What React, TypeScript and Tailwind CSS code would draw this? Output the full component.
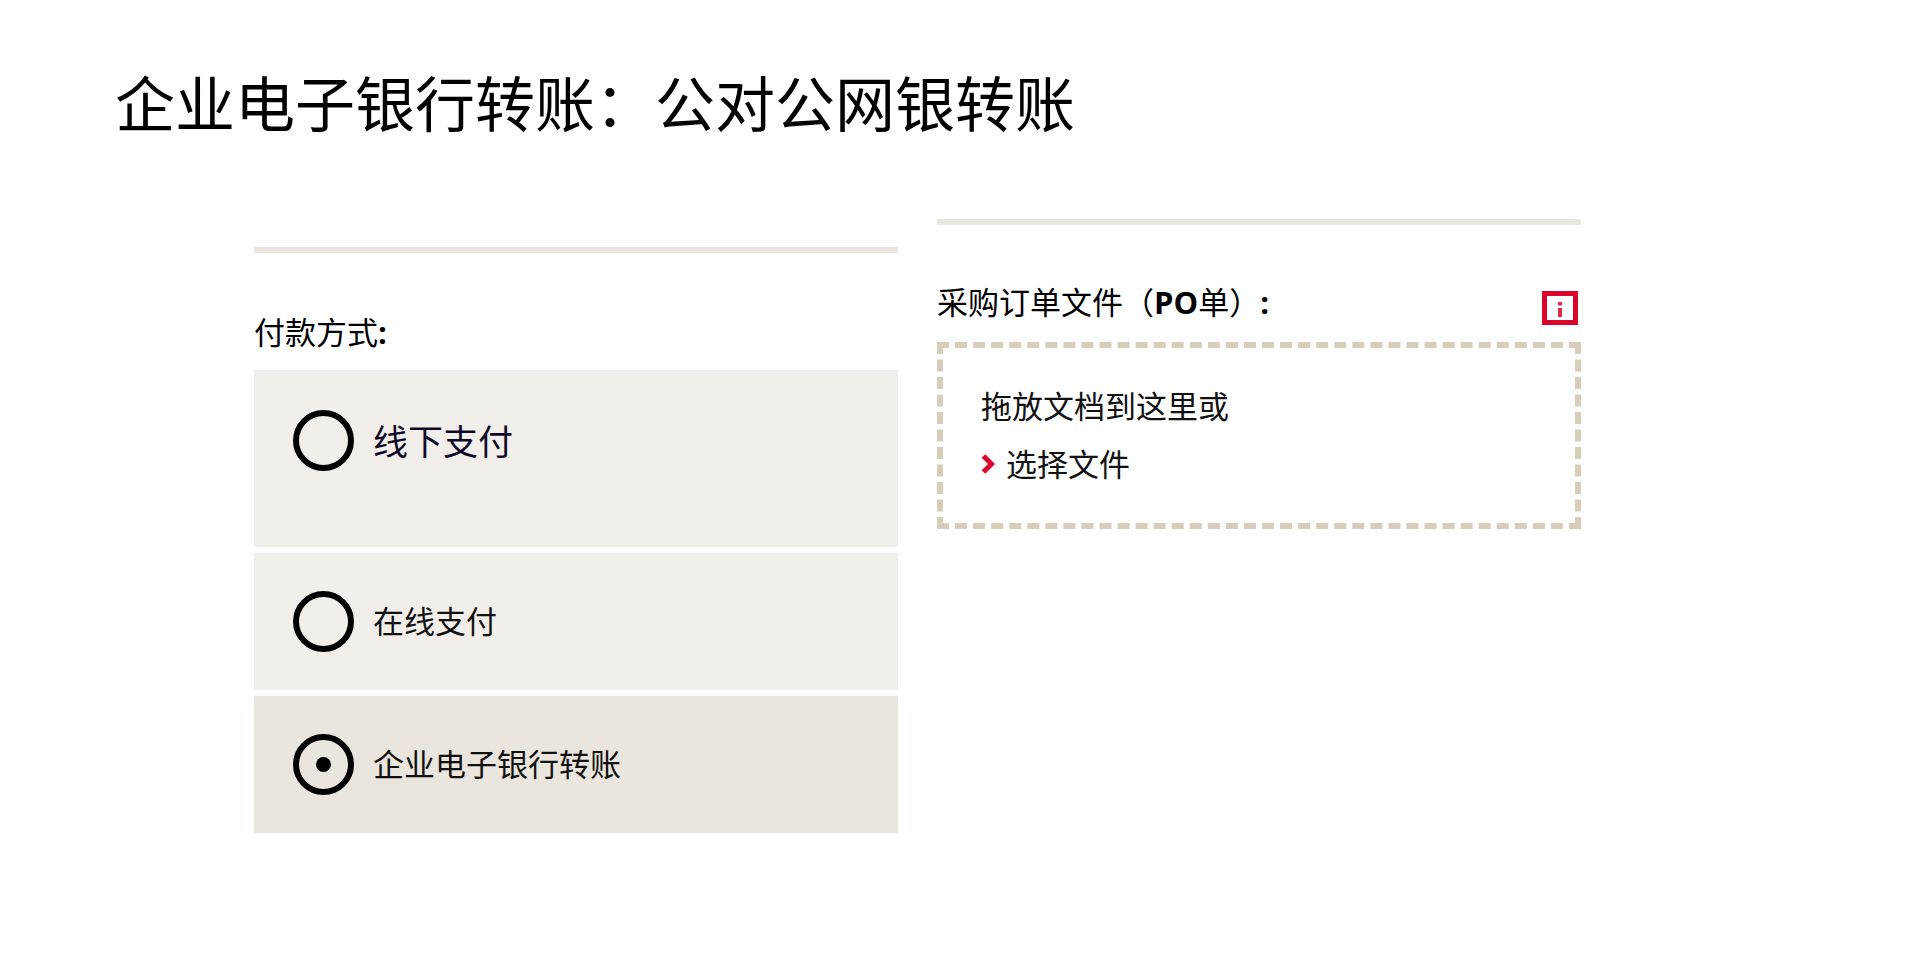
import { useState } from "react";

type PaymentOption = {
  id: string;
  label: string;
  rowClass: string;
  labelClass: string;
};

const options: PaymentOption[] = [
  {
    id: "offline",
    label: "线下支付",
    rowClass: "pt-10 pb-[76px]",
    labelClass: "pt-0.5 text-[35px] text-[#0d0828]",
  },
  {
    id: "online",
    label: "在线支付",
    rowClass: "py-[38px]",
    labelClass: "pb-0.5 text-[31px] text-[#111111]",
  },
  {
    id: "corporate",
    label: "企业电子银行转账",
    rowClass: "py-[38px]",
    labelClass: "pb-0.5 text-[31px] text-[#111111]",
  },
];

function PaymentMethods() {
  const [selected, setSelected] = useState("corporate");
  return (
    <section
      role="radiogroup"
      aria-labelledby="payment-title"
      className="mt-7 border-t-6 border-[#ebe6de]"
    >
      <h2 id="payment-title" className="mt-[59px] mb-[18px] text-[31px] leading-10">
        付款方式<span className="font-bold">:</span>
      </h2>
      <div className="flex flex-col gap-1.5">
        {options.map((option) => (
          <label
            key={option.id}
            className={`flex items-center gap-[19px] pl-[39px] ${option.rowClass} ${
              selected === option.id ? "bg-[#eae5dd]" : "bg-[#f2efea]"
            }`}
          >
            <input
              type="radio"
              name="payment"
              value={option.id}
              checked={selected === option.id}
              onChange={() => setSelected(option.id)}
              className="grid size-[61px] shrink-0 appearance-none place-items-center rounded-full border-6 border-black before:size-[15px] before:rounded-full checked:before:bg-black"
            />
            <span className={`leading-10 ${option.labelClass}`}>{option.label}</span>
          </label>
        ))}
      </div>
    </section>
  );
}

function PurchaseOrderUpload() {
  return (
    <section className="border-t-6 border-[#ebe6de]">
      <div className="mt-[57px] mb-[17px] flex h-[43px] justify-between pr-[3px]">
        <h2 className="text-[31px] leading-10">
          采购订单文件（<span className="font-bold">PO</span>单）
          <span className="font-bold">:</span>
        </h2>
        <button type="button" aria-label="说明" className="self-end">
          <svg width="36" height="34" viewBox="0 0 36 34" className="block">
            <rect x="2.5" y="2.5" width="31" height="29" fill="none" stroke="#d9052c" strokeWidth="5" />
            <path d="M16 11h4v3.5h-4zM16 17h4v9h-4z" fill="#dd2a48" />
          </svg>
        </button>
      </div>
      <div className="border-6 border-dashed border-[#d8cdb8] px-[38px] pt-[29px] pb-[30px] text-[31px] leading-[58px] text-[#111111]">
        <p>拖放文档到这里或</p>
        <button type="button" className="flex items-center gap-[11px]">
          <svg width="14" height="20" viewBox="0 0 14 20" className="block">
            <path d="M2.5 2l8 8-8 8" fill="none" stroke="#d9052c" strokeWidth="5" />
          </svg>
          选择文件
        </button>
      </div>
    </section>
  );
}

export default function App() {
  return (
    <main className="min-h-screen bg-white pt-[59px] pb-16 font-['Open_Sans','Noto_Sans_CJK_SC',sans-serif] text-black">
      <h1 className="pl-[115px] text-6xl leading-[90px]">企业电子银行转账：公对公网银转账</h1>
      <div className="mt-[70px] grid grid-cols-2 items-start gap-[39px] pr-[339px] pl-[254px]">
        <PaymentMethods />
        <PurchaseOrderUpload />
      </div>
    </main>
  );
}
